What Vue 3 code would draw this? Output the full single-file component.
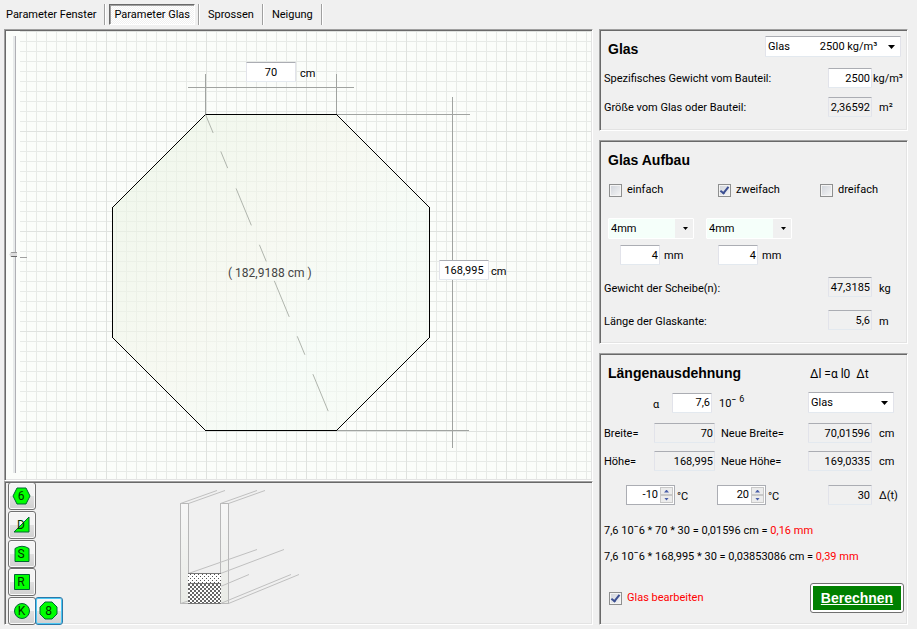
<script setup>
import { ref, reactive } from 'vue'

const tabs = ['Parameter Fenster', 'Parameter Glas', 'Sprossen', 'Neigung']
const activeTab = ref('Parameter Glas')

const nb = (n) => '\u00a0'.repeat(n)
const density = `Glas${nb(11)}2500 kg/m³`

const topWidth = ref('70')
const totalHeight = ref('168,995')
const zoom = ref(50)

const panes = reactive([
  { label: 'einfach', on: false },
  { label: 'zweifach', on: true },
  { label: 'dreifach', on: false },
])
const editGlass = ref(true)
const temps = reactive([-10, 20])

const shapes = [
  { key: '6', name: 'Sechseck', points: '1,10 5,2 14,2 18,10 14,18 5,18' },
  { key: 'D', name: 'Dreieck', points: '2,17 17,2 17,17' },
  { key: 'S', name: 'Segmentbogen', path: 'M3 17.5V4.5Q10 0 17 4.5V17.5Z' },
  { key: 'R', name: 'Rechteck', points: '2.5,2.5 17.5,2.5 17.5,17.5 2.5,17.5' },
]
const roundShapes = [
  { key: 'K', name: 'Kreis', circle: true },
  { key: '8', name: 'Achteck', points: '6,1 13,1 18,6 18,13 13,18 6,18 1,13 1,6' },
]
const activeShape = ref('8')
</script>

<template>
  <div class="app">
    <nav class="tabs">
      <button
        v-for="t in tabs"
        :key="t"
        type="button"
        class="tab"
        :class="{ active: t === activeTab }"
        @click="activeTab = t"
      ><span>{{ t }}</span></button>
    </nav>

    <main class="work">
      <div class="left">
        <section class="sunken canvas">
          <input v-model="zoom" class="track" type="range" min="0" max="100" aria-label="Ansicht" />
          <div class="stage">
            <svg class="drawing" viewBox="20 31 571 448" width="571" height="448">
              <defs>
                <linearGradient id="pane" x1="0" y1="0.1" x2="1" y2="0.9">
                  <stop offset="0" stop-color="#e8f3e2" />
                  <stop offset="0.45" stop-color="#f4f6ec" />
                  <stop offset="0.7" stop-color="#f3fbf5" />
                  <stop offset="1" stop-color="#f6faf2" />
                </linearGradient>
              </defs>
              <path class="dim" d="M188 87.5H354M205.5 74V114M336.5 74V114M452.5 97V448M336 114.5H470M336 430.5H469" />
              <polygon
                class="glass"
                points="205.5,114.5 336.5,114.5 429.5,207.5 429.5,337.5 336.5,430.5 205.5,430.5 112.5,337.5 112.5,207.5"
              />
              <path class="diag" d="M205.5 114.5L336 430" />
              <path class="tick" d="M20 257.5H27" />
              <text class="diag-text" x="228" y="277">( 182,9188 cm )</text>
            </svg>
            <label class="pin pin-width">
              <input v-model="topWidth" class="field center" /><span>cm</span>
            </label>
            <label class="pin pin-height">
              <input v-model="totalHeight" class="field center" /><span>cm</span>
            </label>
          </div>
        </section>

        <section class="sunken bottom">
          <div class="shapes">
            <button
              v-for="s in shapes"
              :key="s.key"
              type="button"
              class="shape"
              :class="{ active: s.key === activeShape }"
              :aria-label="s.name"
              @click="activeShape = s.key"
            >
              <svg viewBox="0 0 20 20" width="20" height="20">
                <path v-if="s.path" :d="s.path" />
                <polygon v-else :points="s.points" />
                <text x="9" y="14">{{ s.key }}</text>
              </svg>
            </button>
            <div class="pair">
              <button
                v-for="s in roundShapes"
                :key="s.key"
                type="button"
                class="shape"
                :class="{ active: s.key === activeShape }"
                :aria-label="s.name"
                @click="activeShape = s.key"
              >
                <svg viewBox="0 0 20 20" width="20" height="20">
                  <circle v-if="s.circle" cx="10" cy="10" r="7.5" />
                  <polygon v-else :points="s.points" />
                  <text x="9.5" y="14">{{ s.key }}</text>
                </svg>
              </button>
            </div>
          </div>
          <svg class="profile" viewBox="176 483 130 140" width="130" height="140">
            <defs>
              <pattern id="dots" width="4" height="4" patternUnits="userSpaceOnUse">
                <rect width="4" height="4" fill="#fff" />
                <rect width="1" height="1" fill="#555" />
                <rect x="2" y="2" width="1" height="1" fill="#555" />
              </pattern>
              <pattern id="checks" width="4" height="4" patternUnits="userSpaceOnUse">
                <rect width="4" height="4" fill="#fff" />
                <rect width="2" height="2" fill="#666" />
                <rect x="2" y="2" width="2" height="2" fill="#666" />
              </pattern>
              <linearGradient id="edge" x1="0" y1="0" x2="0" y2="1">
                <stop offset="0" stop-color="#f7f7f7" />
                <stop offset="1" stop-color="#e9ebe6" />
              </linearGradient>
            </defs>
            <rect class="pane" x="180.5" y="503.5" width="8" height="100" />
            <rect class="pane" x="220.5" y="503.5" width="8" height="100" />
            <path
              class="lines"
              d="M180.5 503.5L217 490.5M188.5 503.5L225 490.5M220.5 503.5L257 490.5M228.5 503.5L265 490.5
                 M188.5 573.5L257 549.5M220.5 573.5L284 549.5M220.5 586.5L249 574.5M220.5 603.5L291 574.5M228.5 603.5L299 574.5
                 M180.5 603.5L188 601"
            />
            <rect x="188" y="573" width="33" height="10" fill="url(#dots)" />
            <rect x="188" y="583" width="33" height="21" fill="url(#checks)" />
            <path class="rim" d="M188 573.5H221M188 583.5H221M188 603.5H221" />
          </svg>
        </section>
      </div>

      <div class="right">
        <section class="sunken card">
          <div class="head">
            <h2>Glas</h2>
            <span class="combo wide">
              <select aria-label="Material"><option>{{ density }}</option></select>
            </span>
          </div>
          <div class="line">
            <label for="spec">Spezifisches Gewicht vom Bauteil:</label>
            <input id="spec" class="field" value="2500" />
            <span class="unit tight">kg/m³</span>
          </div>
          <div class="line">
            <label for="area">Größe vom Glas oder Bauteil:</label>
            <input id="area" class="field" value="2,36592" readonly />
            <span class="unit">m²</span>
          </div>
        </section>

        <section class="sunken card build">
          <h2>Glas Aufbau</h2>
          <div class="checks">
            <label v-for="p in panes" :key="p.label" class="check">
              <input v-model="p.on" type="checkbox" />{{ p.label }}
            </label>
          </div>
          <div class="thick">
            <div v-for="n in 2" :key="n">
              <span class="combo mint">
                <select :aria-label="'Glasdicke ' + n"><option>4mm</option></select>
              </span>
              <label class="mm"><input class="field" value="4" /><span>mm</span></label>
            </div>
          </div>
          <div class="line">
            <label for="weight">Gewicht der Scheibe(n):</label>
            <input id="weight" class="field" value="47,3185" readonly />
            <span class="unit">kg</span>
          </div>
          <div class="line">
            <label for="edge-len">Länge der Glaskante:</label>
            <input id="edge-len" class="field" value="5,6" readonly />
            <span class="unit">m</span>
          </div>
        </section>

        <section class="sunken card expand">
          <div class="split">
            <h2>Längenausdehnung</h2>
            <span class="formula">Δl =α l0&nbsp; Δt</span>
          </div>
          <div class="split">
            <div class="alpha">
              <label for="alpha">α</label>
              <input id="alpha" class="field" value="7,6" />
              <span class="power">10¯ <sup>6</sup></span>
            </div>
            <span class="combo">
              <select aria-label="Werkstoff"><option>Glas</option></select>
            </span>
          </div>
          <div class="sizes">
            <label for="b">Breite=</label>
            <input id="b" class="field" value="70" readonly />
            <label for="nb" class="new">Neue Breite=</label>
            <input id="nb" class="field" value="70,01596" readonly />
            <span class="unit">cm</span>
            <label for="h">Höhe=</label>
            <input id="h" class="field" value="168,995" readonly />
            <label for="nh" class="new">Neue Höhe=</label>
            <input id="nh" class="field" value="169,0335" readonly />
            <span class="unit">cm</span>
          </div>
          <div class="temps">
            <label v-for="(t, i) in temps" :key="i" class="temp">
              <span class="spin">
                <input v-model.number="temps[i]" type="number" />
                <span class="arrows">
                  <button type="button" class="up" aria-label="höher" @click="temps[i]++"></button>
                  <button type="button" class="down" aria-label="tiefer" @click="temps[i]--"></button>
                </span>
              </span>
              <span class="deg">°C</span>
            </label>
            <input id="dt" class="field" value="30" readonly />
            <label for="dt" class="unit">Δ(t)</label>
          </div>
          <p>7,6 10¯6 * 70 * 30 = 0,01596 cm = <em>0,16 mm</em></p>
          <p>7,6 10¯6 * 168,995 * 30 = 0,03853086 cm = <em>0,39 mm</em></p>
          <div class="foot">
            <label class="check red"><input v-model="editGlass" type="checkbox" />Glas bearbeiten</label>
            <button type="button" class="calc"><span>Berechnen</span></button>
          </div>
        </section>
      </div>
    </main>
  </div>
</template>

<style>
body {
  margin: 0;
  background: #f0f0f0;
}
</style>

<style scoped>
.app {
  box-sizing: border-box;
  display: flex;
  flex-direction: column;
  min-height: 100vh;
  padding-bottom: 4px;
  color: #000;
  font: 11px/14px Roboto, "Liberation Sans", Arial, sans-serif;
}
.app *,
.app *::before,
.app *::after {
  box-sizing: border-box;
}
button,
input,
select {
  margin: 0;
  font: inherit;
  color: inherit;
}

/* tab strip */
.tabs {
  display: flex;
  align-items: center;
  height: 29px;
  padding-left: 1px;
}
.tab {
  position: relative;
  height: 21px;
  margin-right: 8px;
  padding: 0 4px;
  border: 1px solid transparent;
  background: none;
}
.tab::after {
  content: "";
  position: absolute;
  top: -1px;
  right: -6px;
  width: 2px;
  height: 21px;
  border-left: 1px solid #a0a0a0;
  background: #fff;
}
.tab.active {
  border-color: #696969 #fff #fff #696969;
  background: repeating-conic-gradient(#fff 0 25%, #f0f0f0 0 50%) 0 0 / 2px 2px;
  box-shadow: inset 1px 1px #a0a0a0;
}

/* frame */
.work {
  flex: 1;
  display: grid;
  grid-template-columns: minmax(0, 1fr) 309px;
  gap: 6px;
  padding: 0 9px 0 4px;
}
.left,
.right {
  display: flex;
  flex-direction: column;
}
.right {
  gap: 9px;
}
.sunken {
  border: 1px solid;
  border-color: #a0a0a0 #fff #fff #a0a0a0;
  box-shadow: inset 1px 1px #696969, inset -1px -1px #e3e3e3;
  padding: 1px;
}

/* drawing area */
.canvas {
  flex: 1;
  display: flex;
  background: #fbfdfa;
}
.track {
  appearance: none;
  writing-mode: vertical-lr;
  width: 14px;
  margin: 5px 0 6px;
  background: linear-gradient(90deg, #e7eaea 2px, #b0b0b5 2px) 7px 0 / 3px 100% no-repeat;
}
.track::-webkit-slider-thumb {
  appearance: none;
  width: 8px;
  height: 5px;
  background: linear-gradient(#999 1px, #ddd 1px 4px, #666 4px);
  clip-path: polygon(0 50%, 30% 0, 100% 0, 100% 100%, 30% 100%);
}
.stage {
  position: relative;
  flex: 1;
  background:
    linear-gradient(90deg, #dfe2df 1px, transparent 1px) 86px 0 / 100px 100px,
    linear-gradient(#dfe2df 1px, transparent 1px) 0 0 / 100px 100px,
    linear-gradient(90deg, #e7eae7 1px, transparent 1px) 6px 0 / 10px 10px,
    linear-gradient(#e7eae7 1px, transparent 1px) 0 0 / 10px 10px;
}
.drawing {
  display: block;
}
.dim {
  stroke: #a0a3a0;
  fill: none;
}
.glass {
  fill: url(#pane);
  fill-opacity: 0.6;
  stroke: #000;
  shape-rendering: crispEdges;
}
.diag {
  stroke: #b0b5ad;
  fill: none;
  stroke-dasharray: 20 20 18 22 40 21 18 21 39 21 20 21 40 60;
}
.tick {
  stroke: #a0a0a0;
}
.diag-text {
  font: 12px Roboto, sans-serif;
  fill: #444;
}
.pin {
  position: absolute;
  display: flex;
  align-items: center;
  gap: 4px;
}
.pin .field {
  width: 50px;
}
.pin span {
  padding-top: 4px;
}
.pin-width {
  left: 226px;
  top: 31px;
}
.pin-height {
  left: 419px;
  top: 229px;
  gap: 2px;
}

/* shape picker */
.bottom {
  display: flex;
}
.shapes {
  display: flex;
  flex-direction: column;
  justify-content: space-between;
  width: 60px;
  margin: -1px 0 -2px 2px;
}
.pair {
  display: flex;
}
.pair .shape + .shape {
  margin-left: -1px;
}
.shape {
  display: grid;
  place-items: center;
  width: 28px;
  height: 28px;
  padding: 0;
  border: 1px solid #707070;
  border-radius: 3px;
  background: linear-gradient(#f4f4f4 50%, #e0e0e0 50%, #d0d0d0);
  box-shadow: inset 0 0 0 1px #fafafa;
}
.shape.active {
  border-color: #2c78a8;
  box-shadow: inset 0 0 0 1px #4cc8f4;
}
.shape svg {
  fill: #00ff00;
  stroke: #063;
}
.shape text {
  font: 12px Roboto, sans-serif;
  text-anchor: middle;
  fill: #003300;
  stroke: none;
}
.profile {
  margin-left: 108px;
}
.pane {
  fill: url(#edge);
  stroke: #b8b8b8;
}
.lines {
  fill: none;
  stroke: #c0c0c0;
}
.rim {
  stroke: #777;
}

/* cards */
h2 {
  margin: 0;
  padding-left: 4px;
  font: bold 14px/18px "Liberation Sans", Arial, sans-serif;
}
.card {
  display: flex;
  flex-direction: column;
  gap: 9px;
  padding: 6px 1px 13px 4px;
}
.head {
  display: flex;
  justify-content: space-between;
  height: 23px;
  padding-right: 5px;
}
.head h2 {
  padding-top: 4px;
}
.line {
  display: grid;
  grid-template-columns: 1fr 44px 34px;
  align-items: center;
}
.line label,
.line .unit,
.sizes label,
.sizes .unit,
.temps .unit {
  padding-top: 2px;
}
.build .line label,
.build .line .unit {
  padding-top: 4px;
}
.unit {
  padding-left: 7px;
}
.unit.tight {
  padding-left: 1px;
}
.field {
  width: 100%;
  height: 20px;
  padding: 0 1px;
  border: 1px solid;
  border-color: #abadb3 #e2e3ea #e3e9ef;
  border-radius: 1px;
  background: #fff;
  text-align: right;
}
.field:read-only {
  background: #f0f0f0;
}
.field.center {
  text-align: center;
}
.combo {
  position: relative;
  display: block;
  width: 86px;
  height: 21px;
}
.combo.wide {
  width: 136px;
}
.combo select {
  appearance: none;
  width: 100%;
  height: 100%;
  padding: 0 2px;
  border: 1px solid;
  border-color: #abadb3 #e2e3ea #e3e9ef;
  border-radius: 1px;
  background: #fff;
}
.combo::after {
  content: "";
  position: absolute;
  top: 9px;
  right: 6px;
  width: 7px;
  height: 4px;
  background: #000;
  clip-path: polygon(0 0, 100% 0, 50% 100%);
  pointer-events: none;
}
.combo.mint select {
  border: 1px solid #fff;
  background: linear-gradient(90deg, #f5fffa calc(100% - 18px), #f0f0f0 0);
}
.combo.mint::after {
  width: 5px;
  height: 3px;
}

.build {
  gap: 13px;
  padding-top: 10px;
}
.checks {
  display: grid;
  grid-template-columns: 109px 102px 1fr;
  margin-top: 1px;
  padding-left: 5px;
}
.check {
  display: flex;
  align-items: center;
  gap: 5px;
}
.check input {
  appearance: none;
  width: 13px;
  height: 13px;
  border: 1px solid #8e8f8f;
  background: linear-gradient(135deg, #cfd3da, #f6f6f6);
  box-shadow: inset 0 0 0 1px #f4f4f4;
}
.check input:checked::after {
  content: "";
  display: block;
  width: 5px;
  height: 9px;
  margin: 0 0 0 3px;
  border: solid #3c4f92;
  border-width: 0 2px 2px 0;
  transform: rotate(38deg);
}
.thick {
  display: flex;
  gap: 12px;
  margin: 8px 0 -1px;
  padding-left: 4px;
}
.mm {
  display: flex;
  align-items: center;
  gap: 4px;
  padding: 6px 0 0 12px;
}
.mm .field {
  width: 40px;
}
.mm span {
  padding-top: 2px;
}

.expand {
  flex: 1;
  gap: 10px;
  padding: 10px 1px 11px 4px;
}
.split {
  display: grid;
  grid-template-columns: 1fr 98px;
  align-items: center;
}
.formula {
  padding: 2px 0 0 2px;
  font-size: 12px;
}
.alpha {
  display: grid;
  grid-template-columns: 19px 40px 1fr;
  align-items: center;
  padding-left: 49px;
}
.alpha label {
  padding-top: 4px;
}
.power {
  padding-left: 7px;
}
.power sup {
  font-size: 9px;
  line-height: 9px;
}
.sizes {
  display: grid;
  grid-template-columns: 50px 61px 93px 64px 34px;
  row-gap: 8px;
  align-items: center;
}
.new {
  padding-left: 6px;
}
.temps {
  display: grid;
  grid-template-columns: 91px 111px 44px 34px;
  align-items: center;
  margin-top: 4px;
  padding-left: 22px;
}
.temp {
  display: flex;
  align-items: center;
  gap: 2px;
}
.deg {
  padding-top: 4px;
}
.spin {
  display: flex;
  width: 49px;
  height: 20px;
  border: 1px solid #abadb3;
  background: #fff;
}
.spin input {
  appearance: textfield;
  flex: 1;
  min-width: 0;
  padding: 0 2px;
  border: 0;
  background: none;
  text-align: right;
}
.spin input::-webkit-inner-spin-button {
  appearance: none;
}
.arrows {
  display: flex;
  flex-direction: column;
  width: 14px;
  padding: 1px 1px 1px 0;
}
.arrows button {
  display: grid;
  place-items: center;
  flex: 1;
  padding: 0;
  border: 1px solid #c8c8c8;
  background: #ececec;
}
.arrows button::after {
  content: "";
  width: 5px;
  height: 3px;
  background: #4a5fa8;
  clip-path: polygon(0 0, 100% 0, 50% 100%);
}
.arrows .up::after {
  clip-path: polygon(50% 0, 100% 100%, 0 100%);
}
p {
  margin: 8px 0 -8px;
  line-height: 16px;
}
em {
  color: #f00;
  font-style: normal;
}
.foot {
  display: flex;
  align-items: center;
  justify-content: space-between;
  margin-top: auto;
  padding: 0 2px 0 5px;
}
.red {
  color: #f00;
}
.calc {
  width: 94px;
  height: 30px;
  padding: 2px;
  border: 1px solid #707070;
  border-radius: 3px;
  background: #fff;
}
.calc span {
  display: grid;
  place-items: center;
  height: 100%;
  background: #008000;
  color: #fff;
  font: bold 14px "Liberation Sans", Arial, sans-serif;
  text-decoration: underline;
}
</style>
